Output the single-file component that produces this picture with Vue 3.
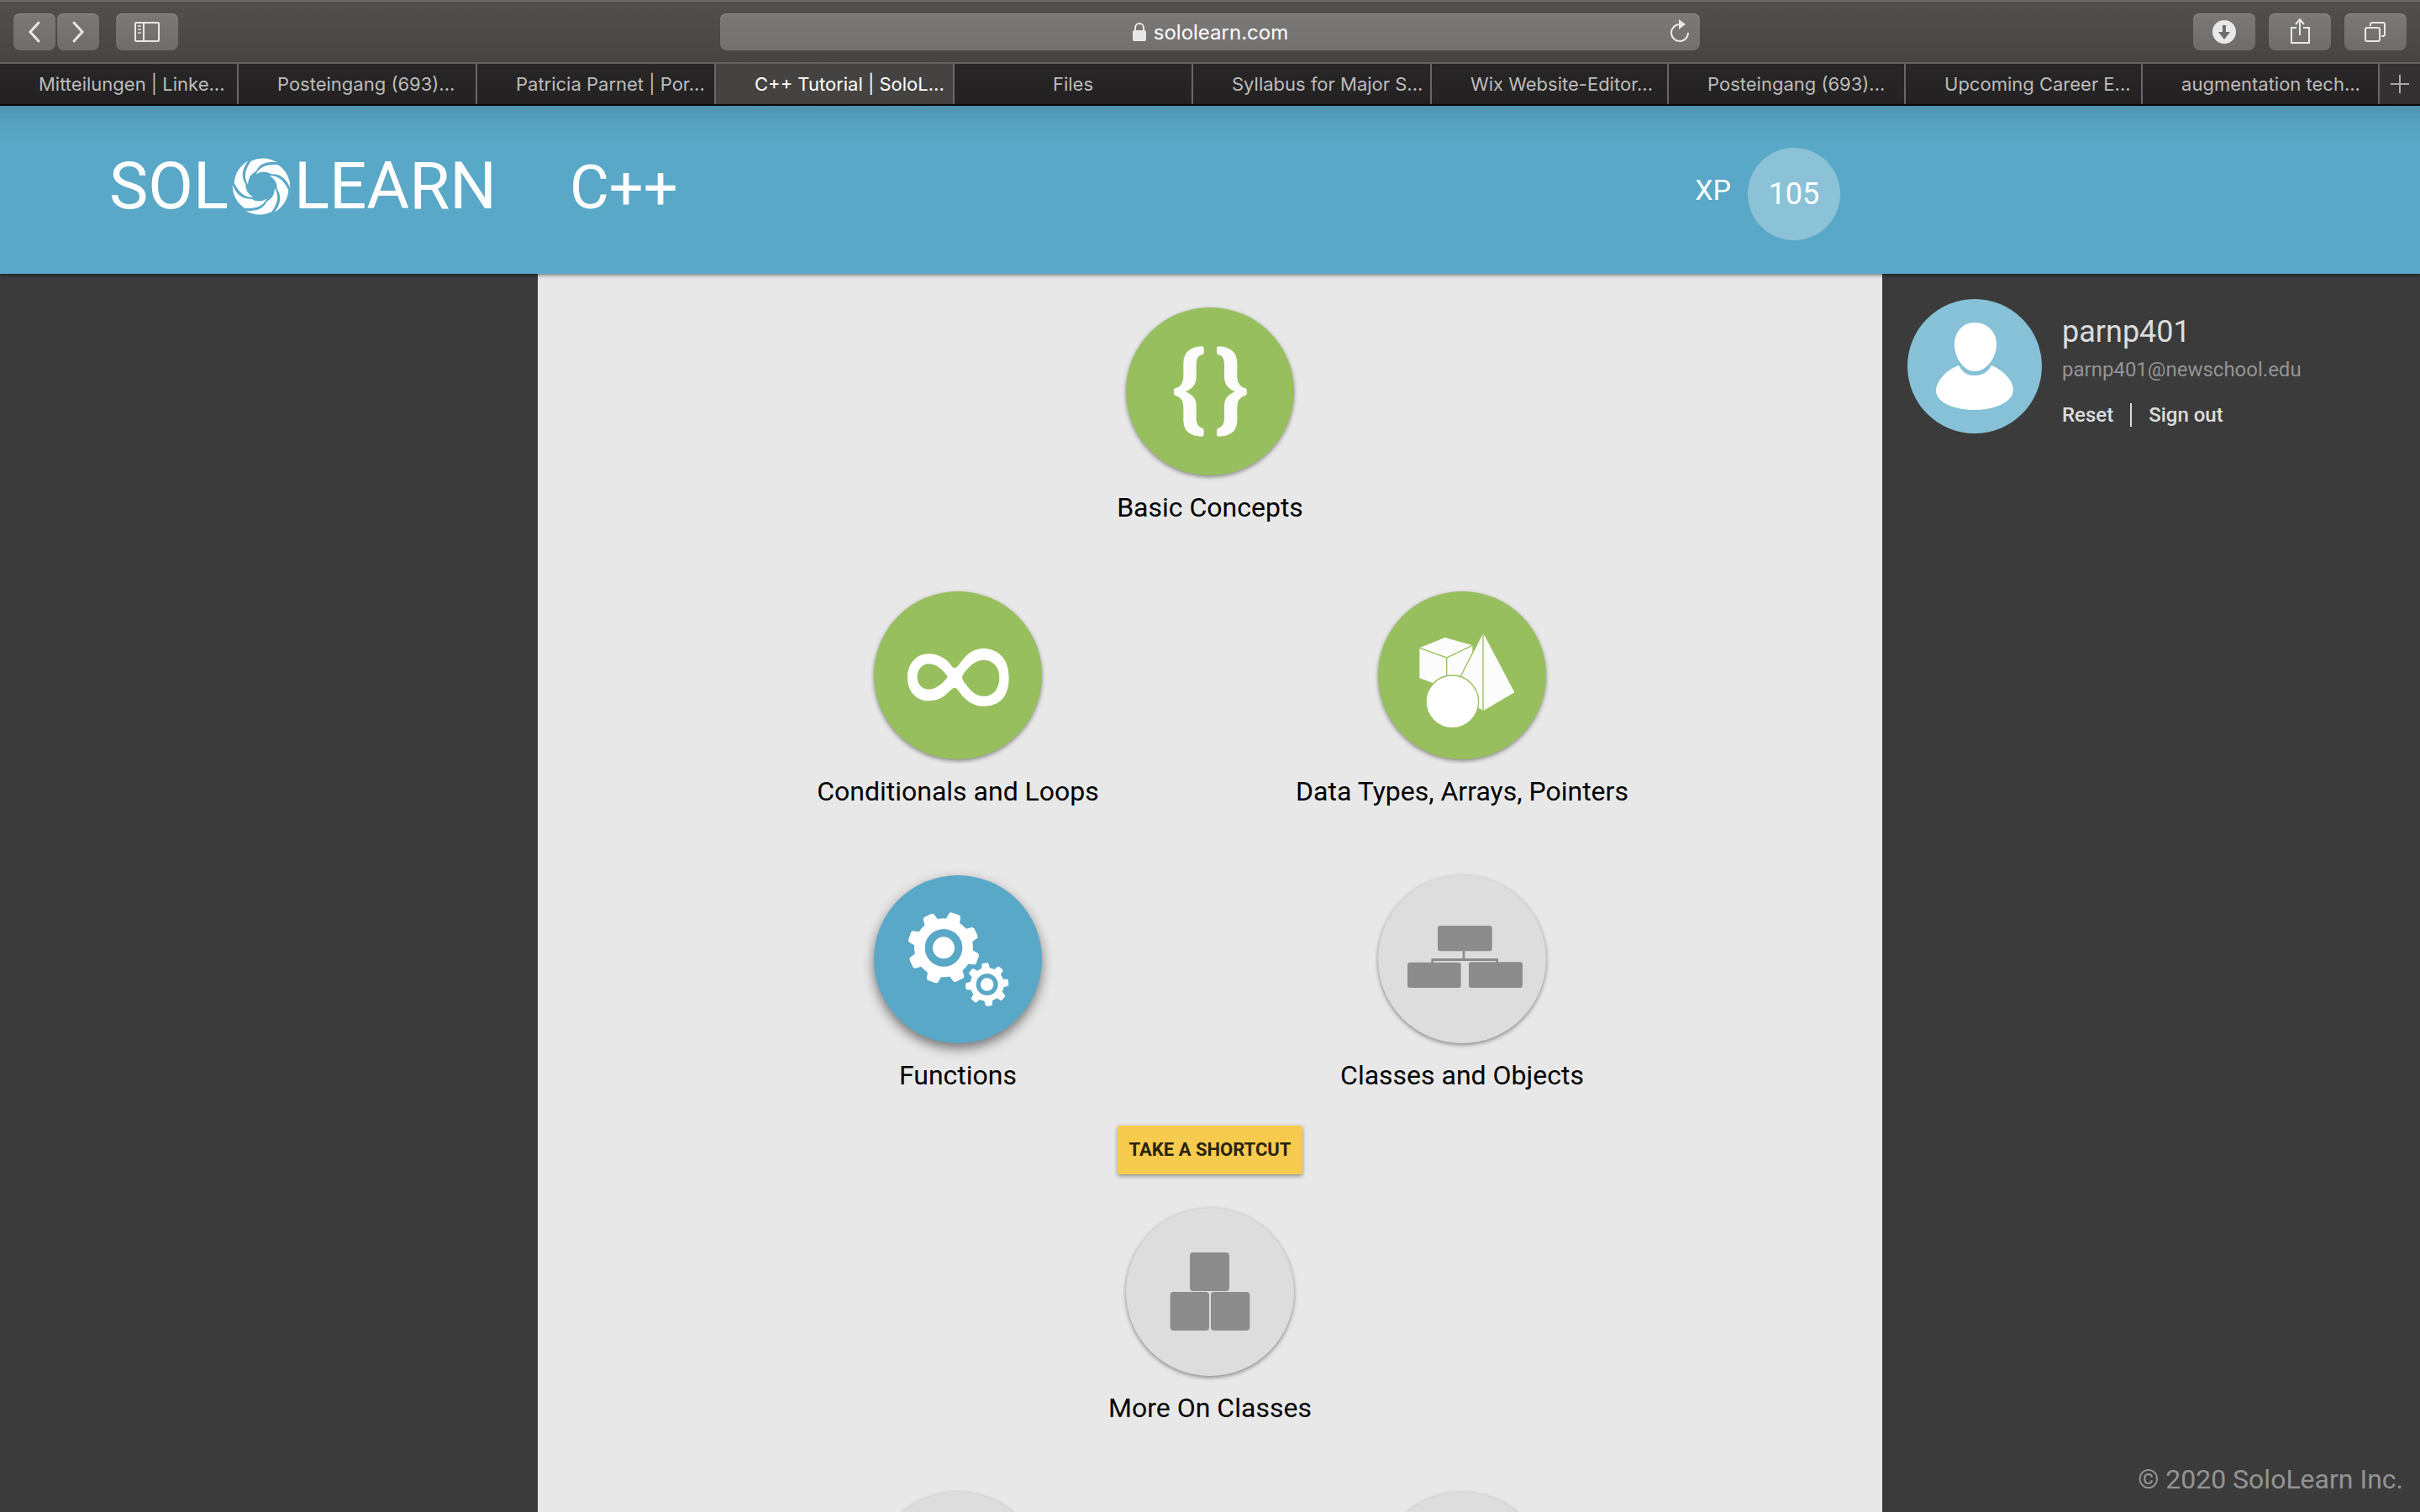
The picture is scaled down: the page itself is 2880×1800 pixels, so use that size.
<script setup>
const tabs = [
  'Mitteilungen | Linke...',
  'Posteingang (693)...',
  'Patricia Parnet | Por...',
  'C++ Tutorial | SoloL...',
  'Files',
  'Syllabus for Major S...',
  'Wix Website-Editor...',
  'Posteingang (693)...',
  'Upcoming Career E...',
  'augmentation tech...',
]
const activeTab = 3

const rows = [
  [{ title: 'Basic Concepts', icon: 'braces', state: 'done' }],
  [
    { title: 'Conditionals and Loops', icon: 'infinity', state: 'done' },
    { title: 'Data Types, Arrays, Pointers', icon: 'shapes', state: 'done' },
  ],
  [
    { title: 'Functions', icon: 'gears', state: 'current' },
    { title: 'Classes and Objects', icon: 'tree', state: 'locked' },
  ],
  [{ title: 'More On Classes', icon: 'blocks', state: 'locked' }],
  [
    { title: '', icon: '', state: 'locked' },
    { title: '', icon: '', state: 'locked' },
  ],
]
const shortcutAfter = 2

function polar(cx, cy, r, deg) {
  const a = (deg * Math.PI) / 180
  return `${(cx + r * Math.cos(a)).toFixed(1)} ${(cy + r * Math.sin(a)).toFixed(1)}`
}

// Outline of an eight-toothed gear
function gear(cx, cy, body, tip, start) {
  let d = ''
  for (let i = 0; i < 8; i++) {
    const a = start + i * 45
    d += `${i ? 'L' : 'M'}${polar(cx, cy, body, a - 14)}`
    d += `L${polar(cx, cy, tip - 5, a - 10)}Q${polar(cx, cy, tip, a - 9)} ${polar(cx, cy, tip, a - 6)}`
    d += `L${polar(cx, cy, tip, a + 6)}Q${polar(cx, cy, tip, a + 9)} ${polar(cx, cy, tip - 5, a + 10)}`
    d += `L${polar(cx, cy, body, a + 14)}`
    d += `A${body} ${body} 0 0 1 ${polar(cx, cy, body, a + 31)}`
  }
  return d + 'Z'
}
const bigGear = gear(249, 259, 105, 129, -71)
const smallGear = gear(404, 390, 60, 77, -95)

// One blade of the logo's shutter, starting at angle a
function blade(a) {
  const p = (r, deg) => polar(105, 105, r, deg)
  return `M${p(48, a - 61)}Q${p(83, a - 38)} ${p(98, a)}A102 102 0 0 1 ${p(103, a + 55)}Q${p(94, a + 22)} ${p(57, a + 1)}Q${p(62, a - 30)} ${p(48, a - 61)}Z`
}
const blades = [0, 1, 2, 3, 4, 5].map((i) => blade(-52 + i * 60))
</script>

<template>
  <div class="window">
    <div class="toolbar">
      <div class="tools">
        <div class="pair">
          <button class="tool narrow" aria-label="Back">
            <svg width="50" height="44" viewBox="0 0 50 44"><path d="M30 11 L20 22 L30 33" class="line thick" /></svg>
          </button>
          <button class="tool narrow" aria-label="Forward">
            <svg width="50" height="44" viewBox="0 0 50 44"><path d="M20 11 L30 22 L20 33" class="line thick" /></svg>
          </button>
        </div>
        <button class="tool" aria-label="Sidebar">
          <svg width="74" height="44" viewBox="0 0 74 44">
            <path d="M24 11H50Q51 11 51 12V32Q51 33 50 33H24Q23 33 23 32V12Q23 11 24 11ZM33 11V33" class="line" />
            <path d="M26 15h4M26 19h4M26 23h4" class="line" opacity=".7" />
          </svg>
        </button>
      </div>
      <div class="address">
        <svg width="18" height="24" viewBox="0 0 18 24">
          <rect x="1" y="10" width="16" height="13" rx="2" fill="#e8e8e8" />
          <path d="M4 11V7a5 5 0 0 1 10 0v4" class="line" />
        </svg>
        <span>sololearn.com</span>
        <button class="reload" aria-label="Reload">
          <svg width="28" height="30" viewBox="0 0 28 30">
            <path d="M14 6A10 10 0 1 0 24 16" class="line" />
            <path d="M13 0L21 6L13 12Z" fill="#e8e8e8" />
          </svg>
        </button>
      </div>
      <div class="tools right">
        <button class="tool" aria-label="Downloads">
          <svg width="74" height="44" viewBox="0 0 74 44">
            <circle cx="37" cy="22" r="14" fill="#e8e8e8" />
            <path d="M35 14h4v8h5l-7 9l-7-9h5z" fill="#6f6d6c" />
          </svg>
        </button>
        <button class="tool" aria-label="Share">
          <svg width="74" height="44" viewBox="0 0 74 44">
            <path d="M33 17H27V35H48V17H41M37 26V7M32 13L37 7L42 13" class="line" />
          </svg>
        </button>
        <button class="tool" aria-label="Tabs">
          <svg width="74" height="44" viewBox="0 0 74 44">
            <path d="M27 17H40Q42 17 42 19V31Q42 33 40 33H27Q25 33 25 31V19Q25 17 27 17Z" class="line" />
            <path d="M31 15V13Q31 11 33 11H46Q48 11 48 13V25Q48 27 46 27H44" class="line" />
          </svg>
        </button>
      </div>
    </div>

    <nav class="tabs">
      <a
        v-for="(tab, i) in tabs"
        :key="i"
        href="#"
        class="tab"
        :class="{ active: i === activeTab, short: tab.length < 10 }"
      >{{ tab }}</a>
      <button class="new-tab" aria-label="New tab">
        <svg width="24" height="24" viewBox="0 0 24 24"><path d="M12 1V23M1 12H23" /></svg>
      </button>
    </nav>

    <header class="header">
      <a href="#" class="logo">
        <span>SOL</span>
        <svg width="70" height="70" viewBox="0 0 210 210"><path v-for="d in blades" :key="d" :d="d" fill="#fff" /></svg>
        <span>LEARN</span>
      </a>
      <div class="course">
        <h1>C++</h1>
        <span class="xp">XP</span>
        <span class="points">105</span>
      </div>
    </header>

    <div class="body">
      <main class="lessons">
        <template v-for="(row, r) in rows" :key="r">
          <div class="row">
            <a v-for="(item, c) in row" :key="c" href="#" class="lesson">
              <span class="disc" :class="item.state">
                <svg viewBox="0 0 600 600">
                  <g v-if="item.icon === 'braces'" fill="#fcfcfc">
                    <path
                      v-for="t in ['', 'translate(602 0) scale(-1 1)']"
                      :key="t"
                      :transform="t"
                      d="M270 139Q205 143 205 200V250Q203 283 175 289Q170 291 170 301Q170 312 175 314Q205 322 205 355V405Q206 458 270 461Q278 461 278 453V438Q278 433 272 431Q252 425 251 400V350Q250 315 212 301Q250 286 251 250V200Q252 172 272 169Q278 167 278 161V147Q278 139 270 139Z"
                    />
                  </g>
                  <path
                    v-else-if="item.icon === 'infinity'"
                    fill="#fff"
                    fill-rule="evenodd"
                    d="M120 308C120 258 152 223 196 223C230 223 252 240 264 250C274 260 278 273 288 273C298 273 304 260 314 248C332 224 356 204 392 204C420 204 482 220 482 308C482 376 448 410 392 410C352 410 328 388 312 368C302 356 298 344 288 344C280 344 272 356 262 364C246 380 226 391 196 391C150 391 120 356 120 308ZM155 306C155 332 172 350 196 350C220 350 240 334 258 313Q266 305 258 297C243 280 225 259 196 259C172 259 155 280 155 306ZM315 308Q315 314 322 324C340 348 360 375 392 375C424 375 448 350 448 308C448 268 424 245 392 245C366 245 342 264 322 292Q315 302 315 308Z"
                  />
                  <g v-else-if="item.icon === 'shapes'" fill="#fcfcfc">
                    <path d="M148 202L239 165L337 193V280L245 345L148 310Z" />
                    <path d="M148 202L245 237L337 193M245 237V320" fill="none" class="seam" />
                    <path d="M374 146L487 361L376 426L358 416L260 372Z" />
                    <path d="M374 148L260 372M375 146V426" class="seam" />
                    <circle cx="265" cy="394" r="94" class="seam" fill="#fff" />
                  </g>
                  <g v-else-if="item.icon === 'gears'" fill="#fff">
                    <path :d="bigGear" />
                    <circle cx="249" cy="259" r="53" class="ring" stroke-width="28" />
                    <path :d="smallGear" />
                    <circle cx="404" cy="390" r="31" class="ring" stroke-width="16" />
                  </g>
                  <g v-else-if="item.icon === 'tree'" fill="#8c8c8c">
                    <rect x="213" y="180" width="194" height="91" rx="9" />
                    <rect x="105" y="311" width="191" height="91" rx="9" />
                    <rect x="324" y="310" width="192" height="92" rx="9" />
                    <path d="M302 270H310V297H429V312H421V306H198V312H190V297H302Z" />
                  </g>
                  <g v-else-if="item.icon === 'blocks'" fill="#8c8c8c">
                    <rect x="228" y="159" width="141" height="138" rx="12" />
                    <rect x="158" y="300" width="139" height="138" rx="12" />
                    <rect x="303" y="300" width="139" height="138" rx="12" />
                  </g>
                </svg>
              </span>
              <span class="title">{{ item.title }}</span>
            </a>
          </div>
          <button v-if="r === shortcutAfter" class="shortcut">TAKE A SHORTCUT</button>
        </template>
      </main>

      <aside class="profile">
        <section class="user">
          <svg class="avatar" width="160" height="160" viewBox="0 0 160 160">
            <circle cx="80" cy="80" r="80" fill="#86c1d7" />
            <path d="M80 28C95 28 106 39 106 54C106 70 94 86 80 86C67 86 56 70 56 54C56 39 66 28 80 28Z" fill="#fff" />
            <path d="M61 79C44 85 34 100 34 109C34 123 56 132 80 132C105 132 126 122 126 108C126 98 115 85 100 79C95 88 88 91 80 91C72 91 66 88 61 79Z" fill="#fff" />
          </svg>
          <div class="details">
            <h2>parnp401</h2>
            <p>parnp401@newschool.edu</p>
            <div class="links">
              <a href="#">Reset</a>
              <a href="#">Sign out</a>
            </div>
          </div>
        </section>
        <footer>© 2020 SoloLearn Inc.</footer>
      </aside>
    </div>
  </div>
</template>

<style>
body {
  margin: 0;
  background: #3b3b3b;
}
</style>

<style scoped>
.window {
  display: flex;
  flex-direction: column;
  height: 100vh;
  overflow: hidden;
  font-family: Roboto, "Liberation Sans", sans-serif;
}
button {
  border: 0;
  padding: 0;
  font-family: inherit;
}
a {
  color: inherit;
  text-decoration: none;
}
svg {
  display: block;
}
.toolbar {
  display: grid;
  grid-template-columns: 1fr minmax(300px, 1166px) 1fr;
  align-items: center;
  flex: none;
  height: 76px;
  box-sizing: border-box;
  padding: 0 16px;
  border-top: 2px solid #6d6b6a;
  border-bottom: 2px solid #646261;
  background: linear-gradient(#52504e, #474543);
  font-family: Inter, "Liberation Sans", sans-serif;
}
.tools {
  display: flex;
  gap: 20px;
}
.tools.right {
  justify-content: flex-end;
  gap: 16px;
}
.pair {
  display: flex;
  gap: 2px;
}
.tool {
  width: 74px;
  height: 44px;
  border-radius: 8px;
  background: linear-gradient(#7b7978, #6f6d6c);
  box-shadow: inset 0 1px #92908f;
}
.narrow {
  width: 50px;
}
.line {
  fill: none;
  stroke: #e8e8e8;
  stroke-width: 2;
}
.thick {
  stroke-width: 3;
  stroke-linecap: round;
}
.address {
  position: relative;
  display: flex;
  align-items: center;
  justify-content: center;
  gap: 8px;
  height: 44px;
  border-radius: 8px;
  background: linear-gradient(#7b7978, #737170);
  box-shadow: inset 0 1px #92908f;
  color: #fff;
  font-size: 24px;
}
.reload {
  position: absolute;
  right: 10px;
  background: none;
}
.tabs {
  display: flex;
  flex: none;
  height: 50px;
  box-sizing: border-box;
  border-bottom: 2px solid #0c0c0c;
  background: linear-gradient(#282626, #232121);
  font: 22px/48px Inter, "Liberation Sans", sans-serif;
  color: #bdbcbc;
}
.tab {
  flex: 284 1 0;
  min-width: 0;
  box-sizing: border-box;
  border-right: 2px solid #6a6867;
  text-indent: 46px;
  white-space: nowrap;
  overflow: hidden;
}
.tab:nth-child(n + 7) {
  flex-grow: 282;
}
.tab.short {
  text-indent: 0;
  text-align: center;
}
.tab.active {
  background: #454342;
  color: #fff;
}
.new-tab {
  display: flex;
  align-items: center;
  justify-content: center;
  flex: none;
  width: 48px;
  background: #333131;
}
.new-tab path {
  stroke: #a9a8a8;
  stroke-width: 2;
}
.header {
  position: relative;
  display: grid;
  grid-template-columns: 2fr 5fr 2fr;
  flex: none;
  height: 200px;
  background: linear-gradient(rgba(0, 0, 0, 0.12), rgba(0, 0, 0, 0.04) 20px, transparent 44px) #5aa8c7;
  box-shadow: 0 1px 5px rgba(0, 0, 0, 0.6);
  color: #fff;
}
.logo {
  display: flex;
  align-items: center;
  gap: 4px;
  height: 192px;
  padding-left: 130px;
  font-size: 78px;
  line-height: 96px;
}
.course {
  display: flex;
  align-items: center;
  height: 210px;
  padding: 0 50px 0 38px;
  font-size: 36px;
}
h1 {
  margin: 0 auto 14px 0;
  font-size: 72px;
  font-weight: 400;
  line-height: 84px;
}
.xp {
  margin: 0 20px 10px 0;
  font-size: 34px;
}
.points {
  width: 110px;
  border-radius: 50%;
  background: #8bc2d7;
  line-height: 110px;
  text-align: center;
}
.body {
  display: grid;
  grid-template-columns: 2fr 5fr 2fr;
  flex: 1;
  min-height: 0;
}
.lessons {
  display: flex;
  flex-direction: column;
  align-items: center;
  gap: 40px;
  grid-column: 2;
  padding-top: 40px;
  overflow: hidden;
  background: #e8e8e8;
}
.row {
  display: flex;
  justify-content: center;
  gap: 160px;
}
.row + .row {
  margin-top: 40px;
}
.lesson {
  display: flex;
  flex-direction: column;
  align-items: center;
  width: 440px;
  color: #000;
}
.disc {
  width: 200px;
  height: 200px;
  border-radius: 50%;
  box-shadow: 0 2px 5px rgba(0, 0, 0, 0.42);
}
.done {
  background: #98bf5e;
}
.current {
  background: #5aa8c7;
  box-shadow: 0 6px 14px rgba(0, 0, 0, 0.5);
}
.locked {
  background: #ddd;
}
.seam {
  stroke: #98bf5e;
  stroke-width: 4;
}
.ring {
  fill: none;
  stroke: #5aa8c7;
}
.title {
  height: 38px;
  margin-top: 20px;
  font-size: 32px;
  font-weight: 450;
  line-height: 36px;
  white-space: nowrap;
}
.shortcut {
  flex: none;
  width: 220px;
  height: 58px;
  padding-bottom: 2px;
  border-radius: 2px;
  background: #f7cb4d;
  box-shadow: 0 2px 5px rgba(0, 0, 0, 0.4);
  color: #2a2410;
  font-size: 22px;
  font-weight: 700;
  white-space: nowrap;
}
.profile {
  display: flex;
  flex-direction: column;
  justify-content: space-between;
  padding: 30px 20px 20px 30px;
  background: #3b3b3b;
  color: #ddd;
}
.user {
  display: flex;
  gap: 24px;
}
.avatar {
  flex: none;
}
.details {
  padding-top: 18px;
  font-size: 24px;
  line-height: 28px;
}
h2 {
  margin: 0 0 10px;
  font-size: 36px;
  font-weight: 450;
  line-height: 42px;
}
p {
  margin: 0 0 26px;
  color: #949494;
}
.links {
  display: flex;
  font-weight: 500;
}
.links a + a {
  margin-left: 20px;
  padding-left: 20px;
  border-left: 2px solid #ddd;
}
footer {
  color: #949494;
  font-size: 32px;
  font-weight: 450;
  line-height: 38px;
  text-align: right;
}
</style>
